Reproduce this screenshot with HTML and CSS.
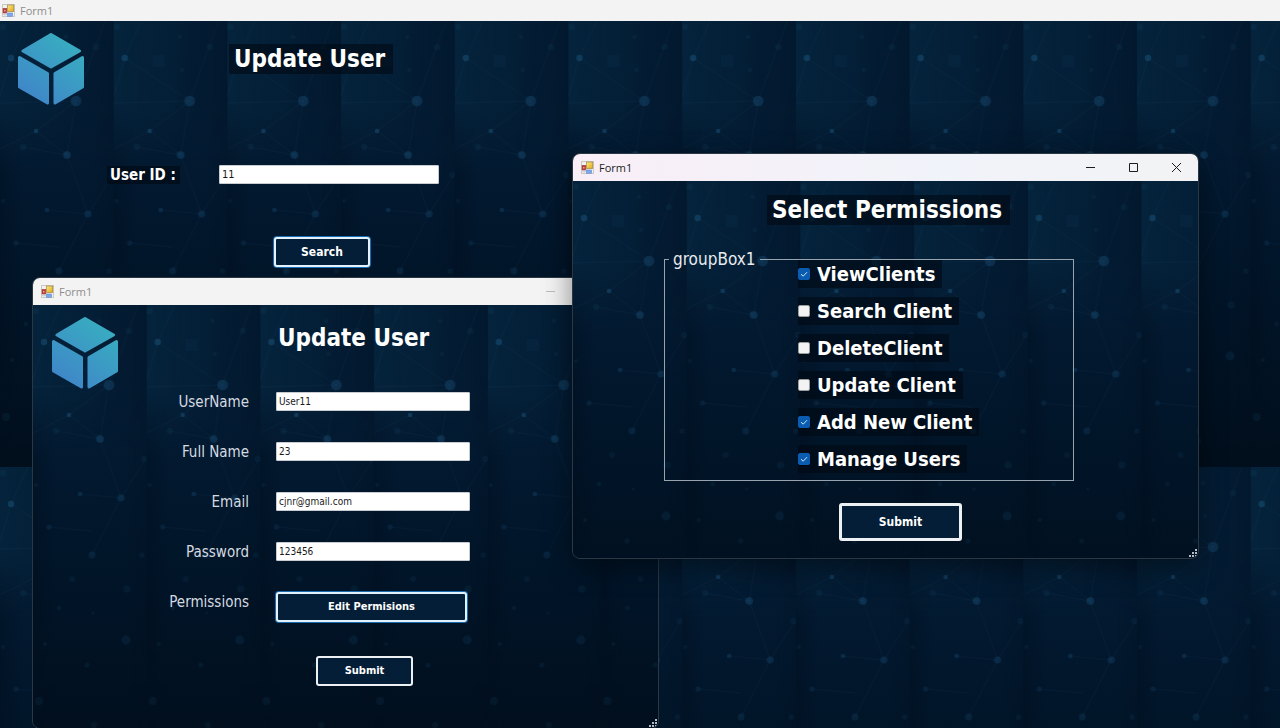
FILE: index.html
```html
<!DOCTYPE html>
<html lang="en">
<head>
<meta charset="utf-8">
<title>Form1</title>
<link rel="stylesheet" href="styles.css">
</head>
<body>
<svg class="defs" aria-hidden="true">
  <defs>
    <linearGradient id="shadeY" x1="0" y1="0" x2="0" y2="1">
      <stop offset="0" stop-color="#031d35"/>
      <stop offset=".2" stop-color="#031c34"/>
      <stop offset=".4" stop-color="#02182e"/>
      <stop offset=".65" stop-color="#011427"/>
      <stop offset="1" stop-color="#010e1c"/>
    </linearGradient>
    <linearGradient id="shadeX" x1="0" y1="0" x2="1" y2="0">
      <stop offset="0" stop-color="#08304a" stop-opacity=".34"/>
      <stop offset=".5" stop-color="#062840" stop-opacity=".2"/>
      <stop offset=".8" stop-color="#000a18" stop-opacity=".1"/>
      <stop offset="1" stop-color="#000a18" stop-opacity=".25"/>
    </linearGradient>
    <linearGradient id="shadeL" x1="0" y1="0" x2="1" y2="0">
      <stop offset="0" stop-color="#000a18" stop-opacity=".3"/>
      <stop offset=".2" stop-color="#000a18" stop-opacity="0"/>
      <stop offset=".8" stop-color="#000a18" stop-opacity="0"/>
      <stop offset="1" stop-color="#000a18" stop-opacity=".15"/>
    </linearGradient>
    <linearGradient id="fadeY" x1="0" y1="0" x2="0" y2="1">
      <stop offset="0" stop-color="#fff"/>
      <stop offset=".18" stop-color="#fff"/>
      <stop offset=".34" stop-color="#000"/>
    </linearGradient>
    <linearGradient id="fadeL" x1="0" y1="0" x2="0" y2="1">
      <stop offset=".18" stop-color="#000"/>
      <stop offset=".34" stop-color="#fff"/>
      <stop offset=".7" stop-color="#fff"/>
      <stop offset="1" stop-color="#000"/>
    </linearGradient>
    <mask id="maskTop"><rect width="114" height="446" fill="url(#fadeY)"/></mask>
    <mask id="maskMid"><rect width="114" height="446" fill="url(#fadeL)"/></mask>
    <pattern id="tile" width="113.7" height="446" patternUnits="userSpaceOnUse">
      <rect width="114" height="446" fill="url(#shadeY)"/>
      <rect width="114" height="446" fill="url(#shadeX)" mask="url(#maskTop)"/>
      <rect width="114" height="446" fill="url(#shadeL)" mask="url(#maskMid)"/>
      <g stroke="#2b6a92" stroke-opacity=".1" stroke-width=".7" fill="none">
        <path d="M11 37 76 80 36 110M76 80 67 134 88 193 59 250M11 37 0 75M11 37 28 0M0 82 76 80M36 110 0 128M76 80 105 0M36 110 67 134M16 222 59 226M47 189 88 193M88 193 112 155M67 134 23 126"/>
      </g>
      <g fill="#1c5a86">
        <circle cx="76" cy="80" r="5.3" fill-opacity=".32"/>
        <circle cx="11" cy="37" r="3.2" fill-opacity=".42"/>
        <circle cx="36" cy="110" r="2.2" fill-opacity=".42"/>
        <circle cx="67" cy="134" r="3.8" fill-opacity=".34"/>
        <circle cx="88" cy="193" r="3.6" fill-opacity=".26"/>
        <circle cx="47" cy="189" r="2.3" fill-opacity=".28"/>
        <circle cx="59" cy="250" r="3.4" fill-opacity=".2"/>
      </g>
      <g fill="#1c5a86" fill-opacity=".12">
        <rect x="39" y="34" width="12" height="12" fill-opacity=".07"/>
        <circle cx="3" cy="6" r="3"/>
        <circle cx="66" cy="16" r="2"/>
        <circle cx="96" cy="26" r="3"/>
        <circle cx="68" cy="49" r="2"/>
        <circle cx="23" cy="126" r="3"/>
        <circle cx="111" cy="154" r="3"/>
        <circle cx="3" cy="180" r="2"/>
        <circle cx="16" cy="222" r="2.6" fill-opacity=".18"/>
        <circle cx="109" cy="250" r="2.6"/>
        <circle cx="39" cy="274" r="2.8"/>
        <circle cx="94" cy="284" r="3.6"/>
        <circle cx="26" cy="303" r="2.2"/>
        <circle cx="60" cy="308" r="1.5"/>
        <circle cx="93" cy="335" r="4.4" fill-opacity=".16"/>
        <circle cx="12" cy="339" r="2"/>
        <circle cx="54" cy="360" r="2.5"/>
        <circle cx="6" cy="396" r="4"/>
        <circle cx="61" cy="420" r="3"/>
      </g>
    </pattern>
    <linearGradient id="cube" gradientUnits="userSpaceOnUse" x1="14" y1="68" x2="58" y2="8">
      <stop offset="0" stop-color="#3f86c8"/>
      <stop offset="1" stop-color="#38aec0"/>
    </linearGradient>
    <linearGradient id="gold" x1="0" y1="0" x2="1" y2="1">
      <stop offset="0" stop-color="#fdea8e"/>
      <stop offset="1" stop-color="#e0a810"/>
    </linearGradient>
    <symbol id="logo" viewBox="0 0 66 72">
      <g fill="url(#cube)" stroke="url(#cube)" stroke-width="3" stroke-linejoin="round">
        <path d="M33 1.500 61.500 18 33 34 5 18Z"/>
        <path d="M1.500 24.500 29.500 40.500V70L1.500 54Z"/>
        <path d="M64.500 24.500 37 40.500V70L64.500 54Z"/>
      </g>
    </symbol>
    <symbol id="appicon" viewBox="0 0 13 13">
      <rect x=".5" y=".5" width="12" height="12" fill="#f1f1f1" stroke="#c9c9c9"/>
      <path d="M.5 10.500H5M3 9V12.500" stroke="#d2d2d2"/>
      <rect x="1" y="4.300" width="3.800" height="4.700" fill="#bf3c36" stroke="#96403c" stroke-width=".5"/>
      <rect x="2" y="6" width="1.500" height="1.500" fill="#e9a29c"/>
      <rect x="5.500" y="1" width="6.300" height="6.500" fill="url(#gold)" stroke="#9b7a2a" stroke-width=".6"/>
      <rect x="5.500" y="9" width="5" height="3.200" fill="#7fa9ec" stroke="#4b7bcb" stroke-width=".5"/>
    </symbol>
    <symbol id="grip" viewBox="0 0 8 8">
      <path d="M6 0h2v2h-2zM6 3h2v2h-2zM3 3h2v2h-2zM6 6h2v2h-2zM3 6h2v2h-2zM0 6h2v2h-2z" fill="#b4bcc4"/>
    </symbol>
  </defs>
</svg>

<main class="desktop">
  <section class="window window-main">
    <header class="titlebar">
      <svg class="appicon" aria-hidden="true"><use href="#appicon"/></svg>
      <span>Form1</span>
    </header>
    <div class="client">
      <svg class="backdrop" aria-hidden="true"><rect width="100%" height="100%" fill="url(#tile)"/></svg>
      <div class="banner">
        <svg class="logo" role="img" aria-label="Logo"><use href="#logo"/></svg>
        <h1 class="title shaded">Update User</h1>
      </div>
      <form class="search">
        <div class="search-row">
          <label class="search-label shaded" for="userid">User ID :</label>
          <input class="textbox" id="userid" type="text" value="11">
        </div>
        <button class="btn btn-focus search-btn" type="button">Search</button>
      </form>
    </div>
  </section>

  <section class="window floating window-user">
    <header class="titlebar">
      <svg class="appicon" aria-hidden="true"><use href="#appicon"/></svg>
      <span>Form1</span>
      <div class="controls">
        <button class="control" type="button" aria-label="Minimize"><svg viewBox="0 0 9 9"><path d="M0 4.500H9"/></svg></button>
        <button class="control" type="button" aria-label="Maximize"><svg viewBox="0 0 9 9"><path d="M.5 .5H8.500V8.500H.5Z"/></svg></button>
        <button class="control" type="button" aria-label="Close"><svg viewBox="0 0 9 9"><path d="M0 0 9 9M9 0 0 9"/></svg></button>
      </div>
    </header>
    <div class="client">
      <svg class="backdrop" aria-hidden="true"><rect width="100%" height="100%" fill="url(#tile)"/></svg>
      <div class="banner">
        <svg class="logo" role="img" aria-label="Logo"><use href="#logo"/></svg>
        <h2 class="title">Update User</h2>
      </div>
      <form class="details">
        <label for="username">UserName</label>
        <input class="textbox" id="username" type="text" value="User11">
        <label for="fullname">Full Name</label>
        <input class="textbox" id="fullname" type="text" value="23">
        <label for="email">Email</label>
        <input class="textbox" id="email" type="text" value="cjnr@gmail.com">
        <label for="password">Password</label>
        <input class="textbox" id="password" type="text" value="123456">
        <label for="permissions">Permissions</label>
        <button class="btn btn-focus" id="permissions" type="button">Edit Permisions</button>
        <button class="btn details-submit" type="button">Submit</button>
      </form>
      <svg class="grip" aria-hidden="true"><use href="#grip"/></svg>
    </div>
  </section>

  <section class="window floating window-perms">
    <header class="titlebar">
      <svg class="appicon" aria-hidden="true"><use href="#appicon"/></svg>
      <span>Form1</span>
      <div class="controls">
        <button class="control" type="button" aria-label="Minimize"><svg viewBox="0 0 9 9"><path d="M0 4.500H9"/></svg></button>
        <button class="control" type="button" aria-label="Maximize"><svg viewBox="0 0 9 9"><path d="M.5 .5H8.500V8.500H.5Z"/></svg></button>
        <button class="control" type="button" aria-label="Close"><svg viewBox="0 0 9 9"><path d="M0 0 9 9M9 0 0 9"/></svg></button>
      </div>
    </header>
    <div class="client">
      <svg class="backdrop" aria-hidden="true"><rect width="100%" height="100%" fill="url(#tile)"/></svg>
      <form class="perms">
        <h2 class="title shaded">Select Permissions</h2>
        <fieldset class="group">
          <legend>groupBox1</legend>
          <div class="checks">
            <label class="check"><input type="checkbox" checked>ViewClients</label>
            <label class="check"><input type="checkbox">Search Client</label>
            <label class="check"><input type="checkbox">DeleteClient</label>
            <label class="check"><input type="checkbox">Update Client</label>
            <label class="check"><input type="checkbox" checked>Add New Client</label>
            <label class="check"><input type="checkbox" checked>Manage Users</label>
          </div>
        </fieldset>
        <button class="btn perms-submit" type="button">Submit</button>
      </form>
      <svg class="grip" aria-hidden="true"><use href="#grip"/></svg>
    </div>
  </section>
</main>
</body>
</html>
```
FILE: styles.css
```css
* {
  box-sizing: border-box;
}

body {
  margin: 0;
  background: #011326;
  color: #fff;
  font-family: "DejaVu Sans Condensed", "Noto Sans", sans-serif;
}

h1,
h2,
form,
fieldset {
  margin: 0;
}

.defs {
  position: absolute;
  width: 0;
  height: 0;
}

/* Desktop and windows */

.desktop {
  position: relative;
  height: 100vh;
  overflow: hidden;
}

.window {
  display: flex;
  flex-direction: column;
}

.window-main {
  height: 100%;
}

.floating {
  position: absolute;
  width: 627px;
  border: 1px solid #2b3844;
  border-radius: 8px;
  overflow: hidden;
}

.window-user {
  left: 32px;
  top: 277px;
  height: 452px;
}

.window-perms {
  left: 572px;
  top: 153px;
  height: 406px;
  box-shadow: 0 8px 28px rgba(0, 0, 0, .45);
}

.titlebar {
  display: flex;
  flex: none;
  align-items: center;
  height: 21px;
  padding-left: 2px;
  gap: 5px;
  background: #f3f3f3;
  color: #8d8d8d;
  font: 11px/16px "Open Sans", "Noto Sans", sans-serif;
}

.floating .titlebar {
  height: 27px;
  padding-left: 8px;
}

.window-perms .titlebar {
  background: linear-gradient(90deg, #f9eef7, #f1f3fa 60%, #f3f3f5);
  color: #1c1c1c;
}

.appicon {
  width: 13px;
  height: 13px;
}

.controls {
  display: flex;
  height: 100%;
  margin-left: auto;
}

.control {
  display: flex;
  align-items: center;
  justify-content: center;
  width: 43px;
  padding: 0;
  border: 0;
  background: none;
  color: #1c1c1c;
}

.window-user .control {
  color: #bdbdbd;
}

.control svg {
  width: 9px;
  height: 9px;
  fill: none;
  stroke: currentColor;
}

.client {
  position: relative;
  flex: 1;
  z-index: 0;
}

.backdrop {
  position: absolute;
  inset: 0;
  z-index: -1;
  width: 100%;
  height: 100%;
}

.grip {
  position: absolute;
  right: 1px;
  bottom: 1px;
  width: 8px;
  height: 8px;
}

/* Shared parts */

.logo {
  width: 66px;
  height: 72px;
}

.title {
  font-size: 24px;
  line-height: 30px;
  font-weight: 700;
}

.shaded {
  background: rgba(0, 8, 18, .6);
}

.textbox {
  width: 100%;
  height: 19px;
  padding: 0 2px;
  border: 1px solid #c8ccd0;
  border-radius: 1px;
  background: #fff;
  color: #1a1a1a;
  font: 10px/16px "DejaVu Sans Condensed", "Noto Sans", sans-serif;
}

.btn {
  height: 30px;
  padding: 0;
  border: 2px solid #eef1f4;
  border-radius: 3px;
  background: #031e36;
  color: #fff;
  font: 700 12px/16px "DejaVu Sans Condensed", "Noto Sans", sans-serif;
}

.btn-focus {
  border-color: #e2f3ff;
  box-shadow: 0 0 0 1px #1a6cb0;
}

/* Search form */

.banner {
  display: flex;
  align-items: flex-start;
}

.window-main .banner {
  padding: 12px 18px 0;
  gap: 145px;
}

.window-main .title {
  margin-top: 11px;
  padding: 0 8px 0 5px;
}

.search {
  padding: 60px 0 0 107px;
}

.search-row {
  display: flex;
  align-items: center;
  width: 332px;
}

.search-row .textbox {
  flex: 1;
  font-size: 11px;
}

.search-label {
  width: 73px;
  padding-left: 3px;
  margin-right: 39px;
  font-size: 15px;
  line-height: 18px;
  font-weight: 700;
  white-space: nowrap;
}

.search-btn {
  width: 96px;
  margin: 53px 0 0 167px;
}

/* User details form */

.window-user .banner {
  padding: 12px 19px 0;
  gap: 160px;
}

.window-user .title {
  margin-top: 6px;
}

.details {
  display: grid;
  grid-template-columns: 216px 194px;
  grid-auto-rows: 20px;
  gap: 30px 27px;
  padding-top: 3px;
}

.details label {
  color: #d5dae0;
  font-size: 15px;
  line-height: 20px;
  text-align: right;
}

.details .btn {
  font-size: 11px;
}

.details .btn-focus {
  margin-right: 3px;
}

.details .details-submit {
  grid-column: 2;
  width: 97px;
  margin: 14px 0 0 40px;
}

/* Permissions form */

.perms {
  display: flex;
  flex-direction: column;
  align-items: flex-start;
}

.perms .title {
  margin: 14px 0 0 194px;
  padding: 0 8px 0 5px;
}

.group {
  width: 410px;
  height: 234px;
  margin: 22px 0 0 91px;
  padding: 0;
  border: 1px solid #98a3ad;
}

.group legend {
  margin-left: 4px;
  padding: 0 4px;
  color: #e8ebee;
  font-size: 17px;
  line-height: 24px;
}

.checks {
  display: flex;
  flex-direction: column;
  align-items: flex-start;
  gap: 9px;
  margin: -11px 0 0 133px;
}

.check {
  display: flex;
  align-items: center;
  gap: 7px;
  padding-right: 7px;
  background: rgba(0, 8, 18, .6);
  font-size: 20px;
  line-height: 28px;
  font-weight: 700;
}

.check input {
  appearance: none;
  width: 12px;
  height: 12px;
  margin: 0;
  border: 1px solid #9c9c9c;
  border-radius: 2px;
  background: #f3f3f3;
}

.check input:checked {
  border-color: #0a5cb0;
  background: #0a5cb0 url("data:image/svg+xml,%3Csvg xmlns='http://www.w3.org/2000/svg' viewBox='0 0 10 10'%3E%3Cpath d='M2 5.200 4.200 7.200 8 3.200' fill='none' stroke='%23cfe4fa'/%3E%3C/svg%3E") center / 10px 10px;
}

.perms-submit {
  width: 123px;
  height: 38px;
  margin: 22px 0 0 266px;
  border-width: 3px;
}
```
